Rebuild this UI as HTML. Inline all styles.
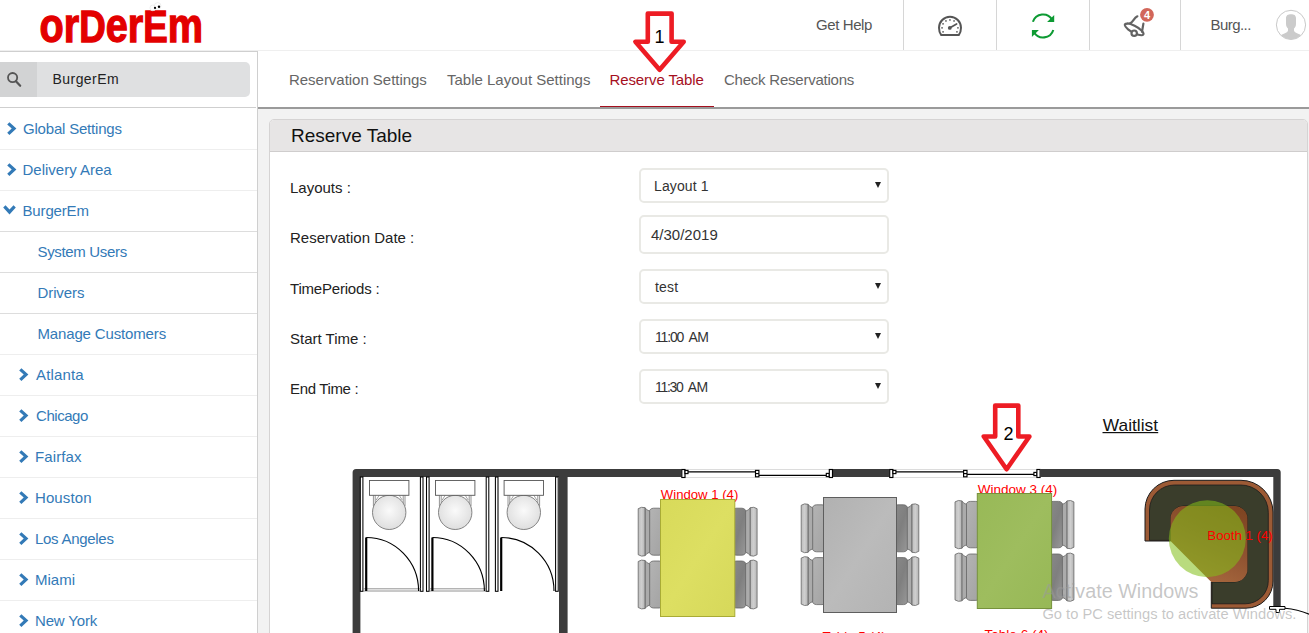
<!DOCTYPE html>
<html lang="en">
<head>
<meta charset="utf-8">
<title>Reserve Table - OrderEm</title>
<style>
*{box-sizing:border-box;margin:0;padding:0}
html,body{width:1309px;height:633px;overflow:hidden;background:#f2f2f2;font-family:"Liberation Sans",sans-serif;font-size:15px;color:#222}
.abs{position:absolute}
.t{position:absolute;white-space:nowrap;line-height:1}
/* header */
#header{position:absolute;left:0;top:0;width:1309px;height:51px;background:#fff;border-bottom:1px solid #efefef}
.hdiv{position:absolute;top:0;width:1px;height:50px;background:#d6d6d6}
/* sidebar */
#sidebar{position:absolute;left:0;top:51px;width:258px;height:582px;background:#fff;border-right:1px solid #cfcfcf;border-top:1px solid #cfcfcf}
#search{position:absolute;left:0;top:10px;width:250px;height:35px;background:#dfe0e1;border-radius:0 5px 5px 0}
#search .ic{position:absolute;left:0;top:0;width:37px;height:35px;background:#d2d3d4}
.srow{position:absolute;left:0;width:257px;height:41px;border-top:1px solid #eee;color:#337ab7}
.srow.sub{border-top-color:#ddd}
.srow span{position:absolute;top:11px;white-space:nowrap;line-height:17px}
/* tabs */
#tabs{position:absolute;left:258px;top:51px;width:1051px;height:56px;background:#fff}
#tabline{position:absolute;left:258px;top:107px;width:1051px;height:2px;background:#9a9a9a}
#tabred{position:absolute;left:600px;top:106px;width:114px;height:1px;background:#a50f1e}
.tab{position:absolute;top:71px;color:#666;white-space:nowrap;line-height:17px}
/* panel */
#panel{position:absolute;left:269px;top:119px;width:1039px;height:520px;background:#fff;border:1px solid #d5d3d3;border-radius:5px 5px 0 0}
#phead{position:absolute;left:0;top:0;width:1037px;height:32px;background:#e7e5e5;border-bottom:1px solid #cfcdcd;border-radius:4px 4px 0 0}
.lbl{position:absolute;left:290px;color:#222;white-space:nowrap;line-height:17px}
.ctl{position:absolute;left:639px;width:250px;height:35px;background:#fff;border:2px solid #e9e9e5;border-radius:5px;color:#333}
.ctl span{position:absolute;left:14px;top:8px;line-height:17px;white-space:nowrap}
.ctl b{font-weight:normal;letter-spacing:-0.6px}
.ctl i{position:absolute;right:6px;top:12px;width:0;height:0;border-left:3.5px solid transparent;border-right:3.5px solid transparent;border-top:6px solid #222}
</style>
</head>
<body>
<div id="header">
  <svg class="abs" style="left:0;top:0" width="260" height="51" viewBox="0 0 260 51">
    <text x="47.4" y="42" transform="scale(0.835,1)" font-family="Liberation Sans, sans-serif" font-weight="bold" font-size="47.5" fill="#e30000" stroke="#e30000" stroke-width="1.3">or<tspan font-size="44">D</tspan>er<tspan font-size="44">E</tspan>m</text>
    <circle cx="152.8" cy="7.9" r="2.9" fill="#fff" stroke="#dcdcdc" stroke-width=".5"/><circle cx="157.7" cy="5.9" r="3.3" fill="#fff" stroke="#dcdcdc" stroke-width=".5"/>
    <circle cx="155" cy="7.9" r="1.1" fill="#000"/><circle cx="159" cy="6.7" r="1.2" fill="#000"/>
  </svg>
  <div class="t" id="gethelp" style="left:816px;top:17px;color:#555;font-size:15px;letter-spacing:-0.4px">Get Help</div>
  <div class="hdiv" style="left:903px"></div>
  <div class="hdiv" style="left:996px"></div>
  <div class="hdiv" style="left:1089px"></div>
  <div class="hdiv" style="left:1180px"></div>

  <svg class="abs" style="left:900px;top:0" width="409" height="51" viewBox="900 0 409 51">
    <!-- gauge -->
    <g fill="none" stroke="#555" stroke-width="2" stroke-linejoin="round" stroke-linecap="round">
      <path d="M941.2 35 C939.5 33 939 30.5 939 27.8 A11 11 0 0 1 961 27.8 C961 30.5 960.5 33 958.8 35 Z"/>
      <path d="M950 27.8 L956.6 24" stroke-width="1.7"/>
    </g>
    <circle cx="949.8" cy="27.9" r="1.9" fill="#555"/>
    <g fill="#555">
      <rect x="941.3" y="27.1" width="1.5" height="1.5"/><rect x="942.3" y="23.1" width="1.5" height="1.5"/>
      <rect x="945.2" y="20.2" width="1.5" height="1.5"/><rect x="949.2" y="19.2" width="1.5" height="1.5"/>
      <rect x="953.3" y="20.2" width="1.5" height="1.5"/><rect x="957.2" y="27.1" width="1.5" height="1.5"/>
      <rect x="956.2" y="31.1" width="1.5" height="1.5"/><rect x="942.3" y="31.1" width="1.5" height="1.5"/>
    </g>
    <!-- refresh -->
    <g fill="none" stroke="#0d9a33" stroke-width="2.1">
      <path d="M1032.9 21.8 A10.6 10.6 0 0 1 1052.2 19.8"/>
      <path d="M1053.3 30 A10.6 10.6 0 0 1 1034 32.2"/>
    </g>
    <path d="M1054.2 15 V22 H1047.1 Z M1031.9 37 V30 H1038.9 Z" fill="#0d9a33"/>
    <!-- bell -->
    <g fill="none" stroke="#636363" stroke-width="2.2" stroke-linecap="round" stroke-linejoin="round">
      <path d="M1137.4 16.3 C1133.5 18 1133.2 22.6 1129.8 23.3 C1127.5 23.8 1124.6 23.2 1124.8 25 C1125 27.5 1130 31.2 1134.5 33.2 C1138.5 35 1142.6 35.8 1143.4 34.2 C1144.3 32.4 1139.5 28.2 1134.6 25.8 C1130.6 23.8 1126.4 23.1 1125.2 24.2"/>
      <path d="M1143.4 23.6 L1142 31.8"/>
      <circle cx="1134.2" cy="33.2" r="2.7" fill="#fff"/>
    </g>
    <circle cx="1147" cy="14.8" r="6.9" fill="#d2665a"/>
    <text x="1147" y="18.6" text-anchor="middle" font-family="Liberation Sans, sans-serif" font-weight="bold" font-size="11" fill="#fff">4</text>
    <!-- avatar -->
    <clipPath id="avc"><circle cx="1291" cy="24.9" r="14.4"/></clipPath>
    <circle cx="1291" cy="24.9" r="14.6" fill="#fff" stroke="#c9c9c9" stroke-width="1"/>
    <g clip-path="url(#avc)" fill="#cbcbcb">
      <path d="M1286 18.5 C1286 15 1288 14.2 1291 14.2 C1294 14.2 1296 15 1296 18.5 V24 C1296 26 1295 27.5 1294 28.5 V30.5 C1294 32 1296 33 1300.5 34.8 L1304 41 H1278 L1281.5 34.8 C1286 33 1288 32 1288 30.5 V28.5 C1287 27.5 1286 26 1286 24 Z"/>
    </g>
  </svg>
  <div class="t" id="burg" style="left:1210.5px;top:17px;color:#555;font-size:15px;letter-spacing:-0.55px">Burg...</div>
</div>

<div id="sidebar">
  <div id="search"><div class="ic"><svg width="37" height="35" viewBox="0 0 37 35"><circle cx="12.6" cy="15.6" r="4.6" fill="none" stroke="#555" stroke-width="1.8"/><path d="M15.9 19.2 L20.2 23.8" stroke="#555" stroke-width="2.2" stroke-linecap="round"/></svg></div><div class="t" id="stext" style="left:52.5px;top:10px;color:#222;font-size:14px;letter-spacing:0.45px">BurgerEm</div></div>
  <div class="abs" style="left:0;top:55px;width:256px;height:1px;background:#cfcfcf"></div>
  <div class="srow" style="top:56px;border-top-color:transparent"><svg class="abs" style="left:6.6px;top:13.2px" width="10" height="14" viewBox="0 0 10 14"><path d="M2.4 0.2 L9.4 6.6 L2.4 13 L0.2 10.8 L4.7 6.6 L0.2 2.4 Z" fill="#337ab7"/></svg><span style="left:23px;letter-spacing:-0.2px">Global Settings</span></div>
  <div class="srow" style="top:97px"><svg class="abs" style="left:6.6px;top:13.2px" width="10" height="14" viewBox="0 0 10 14"><path d="M2.4 0.2 L9.4 6.6 L2.4 13 L0.2 10.8 L4.7 6.6 L0.2 2.4 Z" fill="#337ab7"/></svg><span style="left:22.5px">Delivery Area</span></div>
  <div class="srow" style="top:138px"><svg class="abs" style="left:3.3px;top:13.6px" width="13" height="10" viewBox="0 0 13 10"><path d="M0.2 2.5 L2.5 0.2 L6.5 4.4 L10.5 0.2 L12.8 2.5 L6.5 9.4 Z" fill="#337ab7"/></svg><span style="left:22.5px;letter-spacing:-0.15px">BurgerEm</span></div>
  <div class="srow sub" style="top:179px"><span style="left:37.5px;letter-spacing:-0.33px">System Users</span></div>
  <div class="srow sub" style="top:220px"><span style="left:37.5px;letter-spacing:-0.1px">Drivers</span></div>
  <div class="srow sub" style="top:261px"><span style="left:37.5px;letter-spacing:-0.15px">Manage Customers</span></div>
  <div class="srow" style="top:302px"><svg class="abs" style="left:19.2px;top:13.2px" width="10" height="14" viewBox="0 0 10 14"><path d="M2.4 0.2 L9.4 6.6 L2.4 13 L0.2 10.8 L4.7 6.6 L0.2 2.4 Z" fill="#337ab7"/></svg><span style="left:36px;letter-spacing:0.15px">Atlanta</span></div>
  <div class="srow" style="top:343px"><svg class="abs" style="left:19.2px;top:13.2px" width="10" height="14" viewBox="0 0 10 14"><path d="M2.4 0.2 L9.4 6.6 L2.4 13 L0.2 10.8 L4.7 6.6 L0.2 2.4 Z" fill="#337ab7"/></svg><span style="left:36px;letter-spacing:-0.45px">Chicago</span></div>
  <div class="srow" style="top:384px"><svg class="abs" style="left:19.2px;top:13.2px" width="10" height="14" viewBox="0 0 10 14"><path d="M2.4 0.2 L9.4 6.6 L2.4 13 L0.2 10.8 L4.7 6.6 L0.2 2.4 Z" fill="#337ab7"/></svg><span style="left:35px;letter-spacing:0.1px">Fairfax</span></div>
  <div class="srow" style="top:425px"><svg class="abs" style="left:19.2px;top:13.2px" width="10" height="14" viewBox="0 0 10 14"><path d="M2.4 0.2 L9.4 6.6 L2.4 13 L0.2 10.8 L4.7 6.6 L0.2 2.4 Z" fill="#337ab7"/></svg><span style="left:35px;letter-spacing:0.1px">Houston</span></div>
  <div class="srow" style="top:466px"><svg class="abs" style="left:19.2px;top:13.2px" width="10" height="14" viewBox="0 0 10 14"><path d="M2.4 0.2 L9.4 6.6 L2.4 13 L0.2 10.8 L4.7 6.6 L0.2 2.4 Z" fill="#337ab7"/></svg><span style="left:35px;letter-spacing:-0.28px">Los Angeles</span></div>
  <div class="srow" style="top:507px"><svg class="abs" style="left:19.2px;top:13.2px" width="10" height="14" viewBox="0 0 10 14"><path d="M2.4 0.2 L9.4 6.6 L2.4 13 L0.2 10.8 L4.7 6.6 L0.2 2.4 Z" fill="#337ab7"/></svg><span style="left:35px">Miami</span></div>
  <div class="srow" style="top:548px"><svg class="abs" style="left:19.2px;top:13.2px" width="10" height="14" viewBox="0 0 10 14"><path d="M2.4 0.2 L9.4 6.6 L2.4 13 L0.2 10.8 L4.7 6.6 L0.2 2.4 Z" fill="#337ab7"/></svg><span style="left:35px;letter-spacing:-0.15px">New York</span></div>
</div>

<div id="tabs"></div>
<div class="tab" style="left:289px;letter-spacing:-0.03px">Reservation Settings</div>
<div class="tab" style="left:447px">Table Layout Settings</div>
<div class="tab" style="left:609.5px;color:#a50f1e;letter-spacing:-0.1px">Reserve Table</div>
<div class="tab" style="left:724px;letter-spacing:-0.23px">Check Reservations</div>
<div id="tabline"></div>
<div id="tabred"></div>

<div id="panel"><div id="phead"></div></div>
<div class="t" id="ptitle" style="left:291px;top:126px;font-size:19px;color:#111">Reserve Table</div>

<div class="lbl" style="top:179px">Layouts :</div>
<div class="lbl" style="top:229px">Reservation Date :</div>
<div class="lbl" style="top:280px;letter-spacing:-0.2px">TimePeriods :</div>
<div class="lbl" style="top:330px">Start Time :</div>
<div class="lbl" style="top:380px;letter-spacing:-0.35px">End Time :</div>

<div class="ctl" style="top:168px"><span style="left:13px;font-size:14px;letter-spacing:0.12px">Layout 1</span><i></i></div>
<div class="ctl" style="top:215px;height:39px"><span style="left:10px;top:9px">4/30/2019</span></div>
<div class="ctl" style="top:269px"><span style="font-size:14px;letter-spacing:0.2px">test</span><i></i></div>
<div class="ctl" style="top:319px"><span style="font-size:14px;letter-spacing:-1.15px;word-spacing:2.6px">11:00 <b>AM</b></span><i></i></div>
<div class="ctl" style="top:369px"><span style="font-size:14px;letter-spacing:-1.3px;word-spacing:2.6px">11:30 <b>AM</b></span><i></i></div>

<svg id="plan" class="abs" style="left:0;top:0" width="1309" height="633" viewBox="0 0 1309 633">
<defs>
<radialGradient id="bowl" cx="50%" cy="45%" r="60%"><stop offset="0" stop-color="#fafafa"/><stop offset="1" stop-color="#dcdcdc"/></radialGradient>
<linearGradient id="seatL" x1="0" y1="0" x2="1" y2="1"><stop offset="0" stop-color="#b4b4b4"/><stop offset="1" stop-color="#a2a2a2"/></linearGradient>
<linearGradient id="seatR" x1="0" y1="0" x2="1" y2="1"><stop offset="0" stop-color="#8a8a8a"/><stop offset=".5" stop-color="#7f7f7f"/><stop offset="1" stop-color="#999"/></linearGradient>
<linearGradient id="backG" x1="0" y1="0" x2="1" y2="0"><stop offset="0" stop-color="#bdbdbd"/><stop offset=".5" stop-color="#cfcfcf"/><stop offset="1" stop-color="#b3b3b3"/></linearGradient>
<linearGradient id="tblGray" x1="0" y1="0" x2="1" y2="1"><stop offset="0" stop-color="#b1b1b1"/><stop offset=".5" stop-color="#bbbbbb"/><stop offset="1" stop-color="#b3b3b3"/></linearGradient>
<linearGradient id="tblYel" x1="0" y1="0" x2="1" y2="1"><stop offset="0" stop-color="#d8da5a"/><stop offset=".5" stop-color="#dddf62"/><stop offset="1" stop-color="#d6d85a"/></linearGradient>
<linearGradient id="tblGrn" x1="0" y1="0" x2="1" y2="1"><stop offset="0" stop-color="#98b957"/><stop offset=".5" stop-color="#9ebd5e"/><stop offset="1" stop-color="#97b856"/></linearGradient>
<linearGradient id="boothT" x1="1" y1="0" x2="0.55" y2="1"><stop offset="0" stop-color="#7c4320"/><stop offset=".55" stop-color="#8f5230"/><stop offset="1" stop-color="#a5663d"/></linearGradient>
</defs>
<path d="M352.6 633 V472.5 A3.5 3.5 0 0 1 356.1 469 H681.5 V477 H360.4 V633 Z" fill="#3c3c3c"/>
<rect x="559" y="476" width="8.6" height="157" fill="#3c3c3c"/>
<rect x="833" y="469" width="56.3" height="8" fill="#3c3c3c"/>
<path d="M1040.6 469 H1277.2 A3.5 3.5 0 0 1 1280.7 472.5 V606.5 H1273.3 V477 H1040.6 Z" fill="#3c3c3c"/>
<rect x="684.8" y="469.5" width="144.70000000000005" height="8" fill="#fff" stroke="#dcdcdc" stroke-width="1"/>
<g fill="#fff" stroke="#000" stroke-width="1.15">
<path d="M687.8 471.8 H755.5 M759.0 475.4 H826.5" fill="none"/>
<rect x="681.8" y="469.5" width="3.2" height="8"/>
<rect x="685.0" y="470.4" width="3" height="3.2"/>
<rect x="755.5" y="470.4" width="3.4" height="6.4"/>
<path d="M755.5 473.6 H758.9" fill="none"/>
<rect x="826.3" y="473.4" width="3" height="3.2"/>
<rect x="829.3" y="469.5" width="3.2" height="8"/>
</g>
<rect x="892.7" y="469.5" width="144.39999999999986" height="8" fill="#fff" stroke="#dcdcdc" stroke-width="1"/>
<g fill="#fff" stroke="#000" stroke-width="1.15">
<path d="M895.7 471.8 H963.6 M967.1 474.4 H1034.1" fill="none"/>
<rect x="889.7" y="469.5" width="3.2" height="8"/>
<rect x="892.9000000000001" y="470.4" width="3" height="3.2"/>
<rect x="963.6" y="470.4" width="3.4" height="6.4"/>
<path d="M963.6 473.6 H967.0" fill="none"/>
<rect x="1033.8999999999999" y="472.4" width="3" height="3.2"/>
<rect x="1036.8999999999999" y="469.5" width="3.2" height="8"/>
</g>
<rect x="360.3" y="477" width="2.6" height="114.3" fill="#fff" stroke="#000" stroke-width="1.05"/>
<rect x="420.4" y="477" width="2.6" height="114.3" fill="#fff" stroke="#000" stroke-width="1.05"/>
<rect x="426.5" y="477" width="2.6" height="114.3" fill="#fff" stroke="#000" stroke-width="1.05"/>
<rect x="486.2" y="477" width="2.6" height="114.3" fill="#fff" stroke="#000" stroke-width="1.05"/>
<rect x="495.4" y="477" width="2.6" height="114.3" fill="#fff" stroke="#000" stroke-width="1.05"/>
<rect x="555.6" y="477" width="2.6" height="114.3" fill="#fff" stroke="#000" stroke-width="1.05"/>
<g stroke="#666" stroke-width="0.9" fill="#fff">
<path d="M373.4 495.3 V506 M405.0 495.3 V506 M375.2 495.3 V503 M403.2 495.3 V503" fill="none" stroke="#888"/>
<path d="M379.2 495.3 L376.2 500 M399.2 495.3 L402.2 500" fill="none" stroke="#999"/>
<ellipse cx="389.2" cy="512.4" rx="16.7" ry="17.1" fill="url(#bowl)" stroke="#777"/>
<rect x="369.5" y="480.5" width="39.4" height="14.8" stroke="#555"/>
</g>
<g stroke="#666" stroke-width="0.9" fill="#fff">
<path d="M439.4 495.3 V506 M471.0 495.3 V506 M441.2 495.3 V503 M469.2 495.3 V503" fill="none" stroke="#888"/>
<path d="M445.2 495.3 L442.2 500 M465.2 495.3 L468.2 500" fill="none" stroke="#999"/>
<ellipse cx="455.2" cy="512.4" rx="16.7" ry="17.1" fill="url(#bowl)" stroke="#777"/>
<rect x="435.5" y="480.5" width="39.4" height="14.8" stroke="#555"/>
</g>
<g stroke="#666" stroke-width="0.9" fill="#fff">
<path d="M507.99999999999994 495.3 V506 M539.5999999999999 495.3 V506 M509.79999999999995 495.3 V503 M537.8 495.3 V503" fill="none" stroke="#888"/>
<path d="M513.8 495.3 L510.79999999999995 500 M533.8 495.3 L536.8 500" fill="none" stroke="#999"/>
<ellipse cx="523.8" cy="512.4" rx="16.7" ry="17.1" fill="url(#bowl)" stroke="#777"/>
<rect x="504.09999999999997" y="480.5" width="39.4" height="14.8" stroke="#555"/>
</g>
<path d="M363.2 588.8 H420.6 M363.2 591 H420.6" stroke="#777" stroke-width="0.8" fill="none"/>
<path d="M366.2 591 V537.5" stroke="#000" stroke-width="2.2" fill="none"/>
<path d="M366.2 537.5 A52.400000000000034 53.5 0 0 1 418.6 591" stroke="#000" stroke-width="1.15" fill="none"/>
<path d="M429.4 588.8 H486.4 M429.4 591 H486.4" stroke="#777" stroke-width="0.8" fill="none"/>
<path d="M432.4 591 V537.5" stroke="#000" stroke-width="2.2" fill="none"/>
<path d="M432.4 537.5 A52.0 53.5 0 0 1 484.4 591" stroke="#000" stroke-width="1.15" fill="none"/>
<path d="M501.2 591 V537.5" stroke="#000" stroke-width="2.2" fill="none"/>
<path d="M501.2 537.5 A52.80000000000001 53.5 0 0 1 554 591" stroke="#000" stroke-width="1.15" fill="none"/>
<text x="977.8" y="494" font-family="Liberation Sans, sans-serif" font-size="13" fill="#ff0000" textLength="79.5" lengthAdjust="spacingAndGlyphs">Window 3 (4)</text>
<text x="660.8" y="499" font-family="Liberation Sans, sans-serif" font-size="13" fill="#ff0000" textLength="77.5" lengthAdjust="spacingAndGlyphs">Window 1 (4)</text>
<rect x="649.0" y="508.2" width="14.5" height="47.0" rx="4.5" fill="url(#seatL)" stroke="#666" stroke-width="0.8"/>
<path d="M649.7 511.2 Q646.5 510.2 645.0 507.7 V555.7 Q646.5 553.2 649.7 552.2 Z" fill="#ababab" stroke="#666" stroke-width="0.8"/>
<path d="M645.0 507.7 Q641.5 506.4 638.2 508.7 V554.7 Q641.5 557.0 645.0 555.7 Z" fill="url(#backG)" stroke="#666" stroke-width="0.8"/>
<rect x="649.0" y="561.0" width="14.5" height="47.0" rx="4.5" fill="url(#seatL)" stroke="#666" stroke-width="0.8"/>
<path d="M649.7 564.0 Q646.5 563.0 645.0 560.5 V608.5 Q646.5 606.0 649.7 605.0 Z" fill="#ababab" stroke="#666" stroke-width="0.8"/>
<path d="M645.0 560.5 Q641.5 559.2 638.2 561.5 V607.5 Q641.5 609.8 645.0 608.5 Z" fill="url(#backG)" stroke="#666" stroke-width="0.8"/>
<rect x="731.8" y="508.2" width="14.5" height="47.0" rx="4.5" fill="url(#seatR)" stroke="#666" stroke-width="0.8"/>
<path d="M745.6 511.2 Q748.8 510.2 750.3 507.7 V555.7 Q748.8 553.2 745.6 552.2 Z" fill="#ababab" stroke="#666" stroke-width="0.8"/>
<path d="M750.3 507.7 Q753.8 506.4 757.1 508.7 V554.7 Q753.8 557.0 750.3 555.7 Z" fill="url(#backG)" stroke="#666" stroke-width="0.8"/>
<rect x="731.8" y="561.0" width="14.5" height="47.0" rx="4.5" fill="url(#seatR)" stroke="#666" stroke-width="0.8"/>
<path d="M745.6 564.0 Q748.8 563.0 750.3 560.5 V608.5 Q748.8 606.0 745.6 605.0 Z" fill="#ababab" stroke="#666" stroke-width="0.8"/>
<path d="M750.3 560.5 Q753.8 559.2 757.1 561.5 V607.5 Q753.8 609.8 750.3 608.5 Z" fill="url(#backG)" stroke="#666" stroke-width="0.8"/>
<rect x="660.5" y="499.5" width="74.29999999999995" height="117.0" fill="url(#tblYel)" stroke="#a9ab35" stroke-width="1"/>
<rect x="812.0" y="504.8" width="14.5" height="47.0" rx="4.5" fill="url(#seatL)" stroke="#666" stroke-width="0.8"/>
<path d="M812.7 507.8 Q809.5 506.8 808.0 504.3 V552.3 Q809.5 549.8 812.7 548.8 Z" fill="#ababab" stroke="#666" stroke-width="0.8"/>
<path d="M808.0 504.3 Q804.5 503.0 801.2 505.3 V551.3 Q804.5 553.6 808.0 552.3 Z" fill="url(#backG)" stroke="#666" stroke-width="0.8"/>
<rect x="812.0" y="557.6" width="14.5" height="47.0" rx="4.5" fill="url(#seatL)" stroke="#666" stroke-width="0.8"/>
<path d="M812.7 560.6 Q809.5 559.6 808.0 557.1 V605.1 Q809.5 602.6 812.7 601.6 Z" fill="#ababab" stroke="#666" stroke-width="0.8"/>
<path d="M808.0 557.1 Q804.5 555.8 801.2 558.1 V604.1 Q804.5 606.4 808.0 605.1 Z" fill="url(#backG)" stroke="#666" stroke-width="0.8"/>
<rect x="893.5" y="504.8" width="14.5" height="47.0" rx="4.5" fill="url(#seatR)" stroke="#666" stroke-width="0.8"/>
<path d="M907.3 507.8 Q910.5 506.8 912.0 504.3 V552.3 Q910.5 549.8 907.3 548.8 Z" fill="#ababab" stroke="#666" stroke-width="0.8"/>
<path d="M912.0 504.3 Q915.5 503.0 918.8 505.3 V551.3 Q915.5 553.6 912.0 552.3 Z" fill="url(#backG)" stroke="#666" stroke-width="0.8"/>
<rect x="893.5" y="557.6" width="14.5" height="47.0" rx="4.5" fill="url(#seatR)" stroke="#666" stroke-width="0.8"/>
<path d="M907.3 560.6 Q910.5 559.6 912.0 557.1 V605.1 Q910.5 602.6 907.3 601.6 Z" fill="#ababab" stroke="#666" stroke-width="0.8"/>
<path d="M912.0 557.1 Q915.5 555.8 918.8 558.1 V604.1 Q915.5 606.4 912.0 605.1 Z" fill="url(#backG)" stroke="#666" stroke-width="0.8"/>
<rect x="823.5" y="497.5" width="73.0" height="115.0" fill="url(#tblGray)" stroke="#5e5e5e" stroke-width="1"/>
<rect x="965.8" y="501.4" width="14.5" height="46.4" rx="4.5" fill="url(#seatL)" stroke="#666" stroke-width="0.8"/>
<path d="M966.5 504.4 Q963.3 503.4 961.8 500.9 V548.3 Q963.3 545.8 966.5 544.8 Z" fill="#ababab" stroke="#666" stroke-width="0.8"/>
<path d="M961.8 500.9 Q958.3 499.6 955.0 501.9 V547.3 Q958.3 549.6 961.8 548.3 Z" fill="url(#backG)" stroke="#666" stroke-width="0.8"/>
<rect x="965.8" y="554.0" width="14.5" height="46.4" rx="4.5" fill="url(#seatL)" stroke="#666" stroke-width="0.8"/>
<path d="M966.5 557.0 Q963.3 556.0 961.8 553.5 V600.9 Q963.3 598.4 966.5 597.4 Z" fill="#ababab" stroke="#666" stroke-width="0.8"/>
<path d="M961.8 553.5 Q958.3 552.2 955.0 554.5 V599.9 Q958.3 602.2 961.8 600.9 Z" fill="url(#backG)" stroke="#666" stroke-width="0.8"/>
<rect x="1048.6" y="501.4" width="14.5" height="46.4" rx="4.5" fill="url(#seatR)" stroke="#666" stroke-width="0.8"/>
<path d="M1062.4 504.4 Q1065.6 503.4 1067.1 500.9 V548.3 Q1065.6 545.8 1062.4 544.8 Z" fill="#ababab" stroke="#666" stroke-width="0.8"/>
<path d="M1067.1 500.9 Q1070.6 499.6 1073.9 501.9 V547.3 Q1070.6 549.6 1067.1 548.3 Z" fill="url(#backG)" stroke="#666" stroke-width="0.8"/>
<rect x="1048.6" y="554.0" width="14.5" height="46.4" rx="4.5" fill="url(#seatR)" stroke="#666" stroke-width="0.8"/>
<path d="M1062.4 557.0 Q1065.6 556.0 1067.1 553.5 V600.9 Q1065.6 598.4 1062.4 597.4 Z" fill="#ababab" stroke="#666" stroke-width="0.8"/>
<path d="M1067.1 553.5 Q1070.6 552.2 1073.9 554.5 V599.9 Q1070.6 602.2 1067.1 600.9 Z" fill="url(#backG)" stroke="#666" stroke-width="0.8"/>
<rect x="977.3" y="493.5" width="74.29999999999995" height="115.0" fill="url(#tblGrn)" stroke="#76923c" stroke-width="1"/>
<text x="822.5" y="641.3" font-family="Liberation Sans, sans-serif" font-size="13" fill="#ff0000" textLength="63.5" lengthAdjust="spacingAndGlyphs">Table 5 (4)</text>
<text x="984.5" y="638.9" font-family="Liberation Sans, sans-serif" font-size="13" fill="#ff0000" textLength="64" lengthAdjust="spacingAndGlyphs">Table 6 (4)</text>
<path d="M1145 541 V509 A29 29 0 0 1 1174 480.3 H1241 A32 32 0 0 1 1273 512 V581 A27 27 0 0 1 1246 608.2 H1211.3 V582 H1234.5 A13 13 0 0 0 1247.5 569 V519 A13 13 0 0 0 1234.5 506 H1183.5 A13 13 0 0 0 1170.5 519 V541 Z" fill="#9c5a35" stroke="#1c1c1c" stroke-width="1"/>
<path d="M1149.5 540.4 V510 A25 25 0 0 1 1174.5 485 H1240.5 A27.5 27.5 0 0 1 1268.3 512.5 V580.5 A23 23 0 0 1 1245.3 603.8 H1212 V582 H1234.5 A13 13 0 0 0 1247.5 569 V519 A13 13 0 0 0 1234.5 506 H1183.5 A13 13 0 0 0 1170.5 519 V540.4 Z" fill="#3a3d2b" stroke="#1c1c1c" stroke-width="0.8"/>
<path d="M1170.5 541 V519 A13 13 0 0 1 1183.5 506 H1234.5 A13 13 0 0 1 1247.5 519 V569 A13 13 0 0 1 1234.5 582 H1211.3 Z" fill="url(#boothT)"/>
<circle cx="1207.3" cy="538.8" r="38.5" fill="#82be19" fill-opacity="0.56"/>
<text x="1207.3" y="540.4" font-family="Liberation Sans, sans-serif" font-size="13" fill="#ff0000" textLength="65.5" lengthAdjust="spacingAndGlyphs">Booth 1 (4)</text>
<path d="M1285 608.3 Q1298 609.5 1310 614.5" fill="none" stroke="#000" stroke-width="1.1"/>
<path d="M1269.5 606.5 H1285 V609.3 H1279.5 V612.5 H1276 V609.3 H1269.5 Z" fill="#fff" stroke="#000" stroke-width="1"/>
<text x="1102.8" y="430.6" font-family="Liberation Sans, sans-serif" font-size="17" fill="#111" textLength="55.2" lengthAdjust="spacingAndGlyphs">Waitlist</text>
<rect x="1102.5" y="432" width="55.7" height="1.2" fill="#111"/>
<path d="M647.8 13.6 H671.6 V41.8 H683.7 L659.6 69.7 L635.4 41.8 H647.8 Z" fill="none" stroke="#ed1c24" stroke-width="4.6" stroke-linejoin="round"/>
<path d="M995.2 405.6 H1018.3 V436.5 H1029.4 L1006.6 469.2 L983.8 436.5 H995.2 Z" fill="none" stroke="#ed1c24" stroke-width="4.6" stroke-linejoin="round"/>
<text x="659.4" y="43.4" font-family="Liberation Sans, sans-serif" font-size="18" fill="#000" text-anchor="middle">1</text>
<text x="1008.5" y="439.5" font-family="Liberation Sans, sans-serif" font-size="18" fill="#000" text-anchor="middle">2</text>
<text x="1042.4" y="597.6" font-size="19.5" font-family="Liberation Sans, sans-serif" fill="#9a9a9a" fill-opacity="0.56" textLength="156" lengthAdjust="spacingAndGlyphs">Activate Windows</text>
<text x="1042.4" y="618.6" font-size="14" font-family="Liberation Sans, sans-serif" fill="#9a9a9a" fill-opacity="0.56" textLength="254" lengthAdjust="spacingAndGlyphs">Go to PC settings to activate Windows.</text>
</svg>
</body>
</html>
